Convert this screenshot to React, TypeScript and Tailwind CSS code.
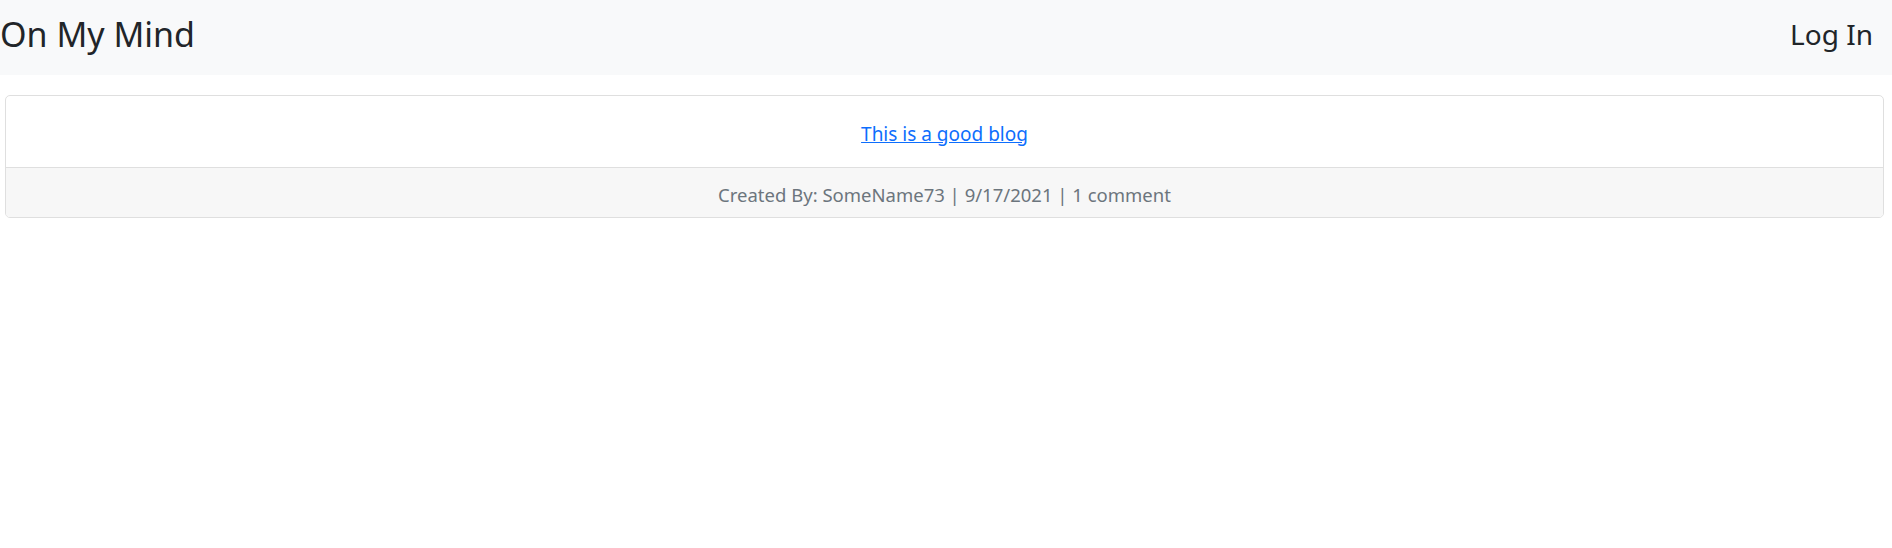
export default function App() {
  return (
    <div className="min-h-screen bg-white font-['Noto_Sans',sans-serif] text-[#212529]">
      <nav className="flex h-[75px] items-center justify-between bg-[#f8f9fa]">
        <a href="#" className="-mt-[8px] text-[34px] leading-none">
          On My Mind
        </a>
        <a href="#" className="-mt-[8px] mr-[19px] text-[28px] leading-none">
          Log In
        </a>
      </nav>
      <div className="ml-[5px] mr-[8px] mt-[20px] overflow-hidden rounded-[5px] border border-[#dfdfdf]">
        <div className="flex h-[71px] items-center justify-center pt-[5px]">
          <a href="#" className="text-[19px] text-[#0d6efd] underline">
            This is a good blog
          </a>
        </div>
        <div className="flex h-[50px] items-center justify-center border-t border-[#dfdfdf] bg-[#f7f7f7] pt-[4px] text-[18.5px] text-[#6c757d]">
          Created By: SomeName73 | 9/17/2021 | 1 comment
        </div>
      </div>
    </div>
  );
}
